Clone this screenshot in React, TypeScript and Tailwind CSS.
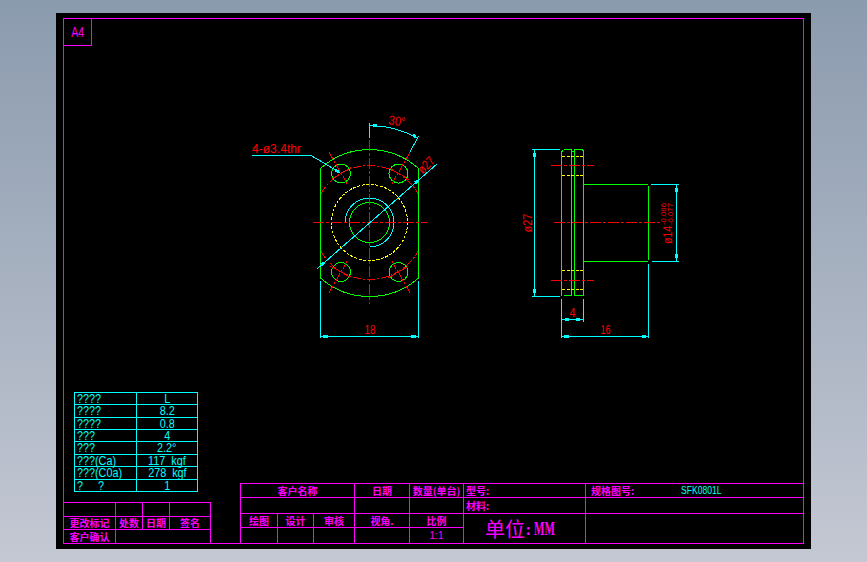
const RED = "#ff0000";
const CYAN = "#00ffff";
const GREEN = "#00ff00";
const YELLOW = "#ffff00";

const cx = 369.5;
const cy = 222.5;

const holes = [
  { x: 341, y: 173.5, a: -120 },
  { x: 398.5, y: 173.5, a: -60 },
  { x: 341, y: 272, a: 120 },
  { x: 398.5, y: 272, a: 60 },
];

const params = [
  { k: "????", v: "L", h: "h-[12px]" },
  { k: "????", v: "8.2", h: "h-[13px]" },
  { k: "????", v: "0.8", h: "h-[12px]" },
  { k: "???", v: "4", h: "h-[12px]" },
  { k: "???", v: "2.2°", h: "h-[13px]" },
  { k: "???(Ca)", v: "117  kgf", h: "h-[12px]" },
  { k: "???(C0a)", v: "278  kgf", h: "h-[13px]" },
  { k: "?     ?", v: "1", h: "h-[12px]" },
];

function Ln(p: { a: number[]; c: string; d?: string; w?: number }) {
  return (
    <line
      x1={p.a[0]}
      y1={p.a[1]}
      x2={p.a[2]}
      y2={p.a[3]}
      stroke={p.c}
      strokeDasharray={p.d}
      strokeWidth={p.w ?? 1}
    />
  );
}

function Tx(p: { x: number; y: number; w: number; s: number; t: string; r?: number; c?: string }) {
  return (
    <text
      x={p.x}
      y={p.y}
      fill={p.c ?? RED}
      fontSize={p.s}
      textLength={p.w}
      lengthAdjust="spacingAndGlyphs"
      textAnchor="middle"
      dominantBaseline="central"
      fontFamily="'Liberation Sans', sans-serif"
      transform={p.r ? `rotate(${p.r} ${p.x} ${p.y})` : undefined}
    >
      {p.t}
    </text>
  );
}

function Front() {
  const pt = (x: number, y: number, a: number, r: number) => {
    const t = (a * Math.PI) / 180;
    return [x + r * Math.cos(t), y + r * Math.sin(t)];
  };
  return (
    <g fill="none">
      <path d="M320.5 168.5 A73 73 0 0 1 418.5 168.5" stroke={GREEN} />
      <path d="M320.5 278 A74 74 0 0 0 418.5 278" stroke={GREEN} />
      <Ln a={[320.5, 168, 320.5, 278]} c={GREEN} />
      <Ln a={[418.5, 168, 418.5, 278]} c={GREEN} />
      <circle cx={cx} cy={cy} r={38} stroke={YELLOW} strokeDasharray="3 1.5" />
      <circle cx={cx} cy={cy} r={20} stroke={GREEN} />
      <path d="M345 222.5 A24.5 24.5 0 1 1 369.5 247" stroke={CYAN} />
      <path d="M321 193.5 A56 56 0 0 1 418 193.5" stroke={RED} strokeDasharray="8 2 2 2" />
      <path d="M321 251.5 A56 56 0 0 0 418 251.5" stroke={RED} strokeDasharray="8 2 2 2" />
      {holes.map((h) => (
        <g key={h.a}>
          <circle cx={h.x} cy={h.y} r={9.5} stroke={GREEN} />
          <Ln a={[...pt(cx, cy, h.a, 45), ...pt(cx, cy, h.a, 82)]} c={RED} d="8 2 2 2" />
          <Ln a={[...pt(h.x, h.y, h.a + 90, 12), ...pt(h.x, h.y, h.a - 90, 12)]} c={RED} d="8 2 2 2" />
        </g>
      ))}
      <Ln a={[313, cy, 427, cy]} c={RED} d="11 2 3 2" />
      <Ln a={[cx, 140, cx, 304]} c={RED} d="11 2 3 2" />

      <Ln a={[cx, 123, cx, 138]} c={CYAN} />
      <path d="M369.5 125.5 A97 97 0 0 1 418 138.5" stroke={CYAN} />
      <Ln a={[418.5, 136.5, 410, 151.5]} c={CYAN} />
      <Ln a={[373, 125, 377, 125.5]} c={CYAN} w={3} />
      <Ln a={[413, 135.5, 416, 136.5]} c={CYAN} w={3} />
      <Tx x={397} y={121} w={17} s={13} t="30°" r={8} />

      <Ln a={[252, 155.5, 311, 155.5]} c={CYAN} />
      <Ln a={[311, 155.5, 340, 172.5]} c={CYAN} />
      <Ln a={[335, 170, 339, 172]} c={CYAN} w={3} />
      <Tx x={276.5} y={148} w={49} s={13} t="4-ø3.4thr" />

      <Ln a={[317.5, 268.5, 437.5, 163.5]} c={CYAN} />
      <Ln a={[321, 265, 324, 262.5]} c={CYAN} w={3} />
      <Ln a={[415, 183, 418, 180.5]} c={CYAN} w={3} />
      <Tx x={426} y={165} w={18} s={13} t="ø27" r={-45} />

      <Ln a={[320.5, 281, 320.5, 338]} c={CYAN} />
      <Ln a={[418.5, 281, 418.5, 338]} c={CYAN} />
      <Ln a={[320.5, 336.5, 418.5, 336.5]} c={CYAN} />
      <Ln a={[323, 336.5, 328, 336.5]} c={CYAN} w={3} />
      <Ln a={[411, 336.5, 416, 336.5]} c={CYAN} w={3} />
      <Tx x={370} y={329} w={11} s={13} t="18" />
    </g>
  );
}

function Side() {
  return (
    <g fill="none">
      <Ln a={[532, 149.5, 560, 149.5]} c={CYAN} />
      <Ln a={[532, 296.5, 560, 296.5]} c={CYAN} />
      <Ln a={[534.5, 149, 534.5, 296]} c={CYAN} />
      <Ln a={[534.5, 153, 534.5, 157]} c={CYAN} w={3} />
      <Ln a={[534.5, 289, 534.5, 293]} c={CYAN} w={3} />
      <Tx x={527} y={223} w={19} s={13} t="ø27" r={-90} />

      <path d="M561.5 296 V152 L563 150.5" stroke={GREEN} />
      <path d="M564 149.5 H571.5 V295.5 H564" stroke={GREEN} />
      <path d="M574.5 295.5 V149.5 H582 L583.5 151 V295.5 H574.5" stroke={GREEN} />
      <Ln a={[571.5, 151.5, 574.5, 151.5]} c={GREEN} />
      {[156.5, 175.5, 270.5, 289.5].map((y) => (
        <Ln key={y} a={[562, y, 583, y]} c={YELLOW} d="3 1.5" />
      ))}
      {[165.5, 280.5].map((y) => (
        <Ln key={y} a={[551, y, 594, y]} c={RED} d="11 2 3 2" />
      ))}
      <Ln a={[584, 184.5, 648, 184.5]} c={GREEN} />
      <Ln a={[584, 261.5, 648, 261.5]} c={GREEN} />
      <Ln a={[648.5, 186, 648.5, 260]} c={GREEN} />
      <Ln a={[554, 222.5, 660, 222.5]} c={RED} d="11 2 3 2" />

      <Ln a={[651, 184.5, 679, 184.5]} c={CYAN} />
      <Ln a={[652, 261.5, 679, 261.5]} c={CYAN} />
      <Ln a={[676.5, 184, 676.5, 261]} c={CYAN} />
      <Ln a={[676.5, 188, 676.5, 192]} c={CYAN} w={3} />
      <Ln a={[676.5, 254, 676.5, 258]} c={CYAN} w={3} />
      <Tx x={667.5} y={235} w={18} s={13} t="ø14" r={-90} />
      <Tx x={663.5} y={214} w={22} s={8} t="-0.086" r={-90} />
      <Tx x={670.5} y={214} w={22} s={8} t="-0.077" r={-90} />

      <Ln a={[561.5, 299, 561.5, 338]} c={CYAN} />
      <Ln a={[583.5, 299, 583.5, 322]} c={CYAN} />
      <Ln a={[561.5, 319.5, 583.5, 319.5]} c={CYAN} />
      <Ln a={[565, 319.5, 569, 319.5]} c={CYAN} w={3} />
      <Ln a={[576, 319.5, 580, 319.5]} c={CYAN} w={3} />
      <Tx x={572.5} y={312} w={6} s={13} t="4" />
      <Ln a={[648.5, 264, 648.5, 338]} c={CYAN} />
      <Ln a={[561.5, 336.5, 648.5, 336.5]} c={CYAN} />
      <Ln a={[564, 336.5, 569, 336.5]} c={CYAN} w={3} />
      <Ln a={[642, 336.5, 646, 336.5]} c={CYAN} w={3} />
      <Tx x={605.5} y={329} w={10} s={13} t="16" />
    </g>
  );
}

function Cell({ children, className }: { children?: React.ReactNode; className?: string }) {
  return (
    <div className={`flex items-center justify-center border-[#ff00ff] font-bold text-[#ff00ff] ${className ?? ""}`}>
      {children}
    </div>
  );
}

function ParamTable() {
  return (
    <div className="ml-[10px] mb-[10px] w-[124px] border border-b-0 border-[#00ffff] font-['Liberation_Sans',sans-serif] text-[12px] leading-[10px] text-[#00ffff]">
      {params.map((p, i) => (
        <div key={i} className={`flex border-b border-[#00ffff] ${p.h}`}>
          <div className="flex w-[62px] items-center border-r border-[#00ffff] pl-[2px]">
            <span className="origin-left scale-x-[0.9] whitespace-pre">{p.k}</span>
          </div>
          <div className="flex flex-1 items-center justify-center">
            <span className="scale-x-[0.9] whitespace-pre">{p.v}</span>
          </div>
        </div>
      ))}
    </div>
  );
}

function ChangeTable() {
  return (
    <div className="w-[147px] border-t border-r border-[#ff00ff] text-[10px] leading-none">
      <div className="grid h-[14px] grid-cols-[52px_27px_27px_1fr]">
        <Cell className="border-r border-b" />
        <Cell className="border-r border-b" />
        <Cell className="border-r border-b" />
        <Cell className="border-b" />
      </div>
      <div className="grid h-[13px] grid-cols-[52px_27px_27px_1fr]">
        <Cell className="border-r border-b">更改标记</Cell>
        <Cell className="border-r border-b">处数</Cell>
        <Cell className="border-r border-b">日期</Cell>
        <Cell className="border-b">签名</Cell>
      </div>
      <div className="grid h-[13px] grid-cols-[52px_1fr]">
        <Cell className="border-r">客户确认</Cell>
        <Cell />
      </div>
    </div>
  );
}

function TitleBlock() {
  return (
    <div className="ml-[29px] grid flex-1 grid-cols-[37px_36px_41px_55px_54px_122px_217px] grid-rows-[14px_16px_14px_15px] border-t border-l border-[#ff00ff] text-[10px] leading-none">
      <Cell className="col-span-3 border-r border-b">客户名称</Cell>
      <Cell className="border-r border-b">日期</Cell>
      <Cell className="border-r border-b">数量(单台)</Cell>
      <Cell className="justify-start! border-r border-b pl-[2px]">型号:</Cell>
      <Cell className="justify-start! border-b pl-[5px]">
        规格图号:
        <span className="ml-[47px] origin-left scale-x-[0.78] font-['Liberation_Sans',sans-serif] text-[11px] font-normal text-[#00ffff]">
          SFK0801L
        </span>
      </Cell>

      <Cell className="col-span-3 border-r border-b" />
      <Cell className="border-r border-b" />
      <Cell className="border-r border-b" />
      <Cell className="justify-start! border-r border-b pl-[2px]">材料:</Cell>
      <Cell className="border-b" />

      <Cell className="border-r border-b">绘图</Cell>
      <Cell className="border-r border-b">设计</Cell>
      <Cell className="border-r border-b">审核</Cell>
      <Cell className="border-r border-b">视角.</Cell>
      <Cell className="border-r border-b">比例</Cell>
      <Cell className="row-span-2 justify-start! border-r pl-[21px] text-[20px] font-normal!">
        单位
        <span className="ml-[1px] text-[14px] font-bold">:</span>
        <span className="ml-[3px] origin-left scale-x-[0.58] font-['Liberation_Serif',serif] text-[19px] font-bold">
          MM
        </span>
      </Cell>
      <Cell className="row-span-2" />

      <Cell className="border-r" />
      <Cell className="border-r" />
      <Cell className="border-r" />
      <Cell className="border-r" />
      <Cell className="border-r font-['Liberation_Sans',sans-serif] font-normal text-[#00ffff]">1:1</Cell>
    </div>
  );
}

export default function App() {
  return (
    <div className="h-[562px] w-[867px] overflow-hidden bg-linear-to-b from-[#8b9bae] to-[#c4c8d3] pl-[56px] pt-[13px]">
      <div className="relative h-[536px] w-[755px] bg-black pl-[7px] pt-[5px] font-['Noto_Sans_CJK_SC',sans-serif]">
        <div className="flex h-[526px] w-[741px] flex-col justify-between border border-[#ff00ff]">
          <div className="flex h-[27px] w-[28px] items-center justify-center border-r border-b border-[#ff00ff] font-['Liberation_Sans',sans-serif] text-[14px] text-[#ff00ff]">
            <span className="scale-x-[0.75]">A4</span>
          </div>
          <div className="flex items-end">
            <div>
              <ParamTable />
              <ChangeTable />
            </div>
            <TitleBlock />
          </div>
        </div>
        <svg
          className="absolute inset-0 h-[536px] w-[755px]"
          viewBox="56 13 755 536"
          shapeRendering="crispEdges"
        >
          <Front />
          <Side />
        </svg>
      </div>
    </div>
  );
}
